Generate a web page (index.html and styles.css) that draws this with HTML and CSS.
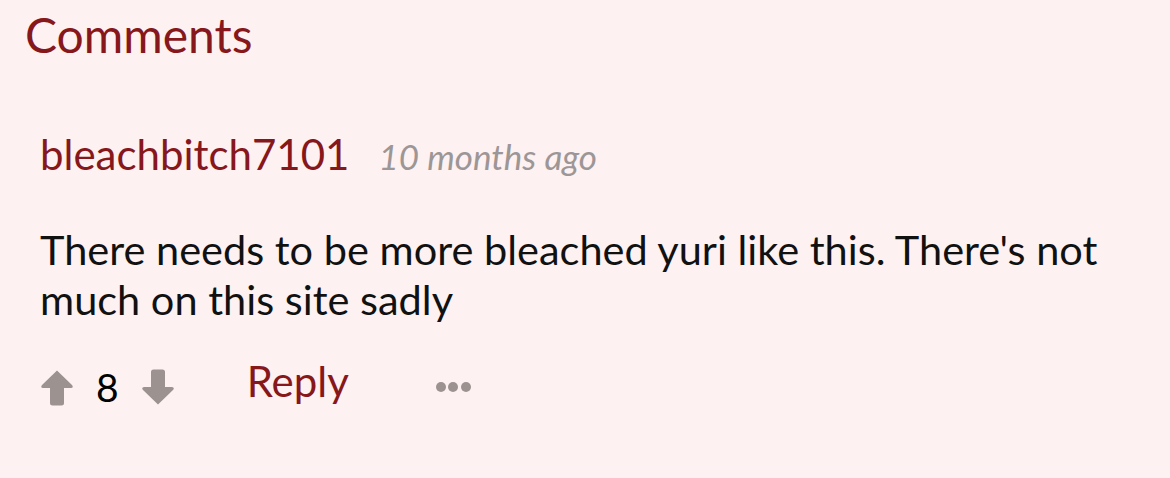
FILE: index.html
```html
<!DOCTYPE html>
<html lang="en">
<head>
<meta charset="utf-8">
<link rel="stylesheet" href="styles.css">
</head>
<body>
<section class="comments">
  <h2 class="title">Comments</h2>
  <article class="comment">
    <header class="meta">
      <span class="author">bleachbitch7101</span>
      <span class="time">10 months ago</span>
    </header>
    <p class="text">There needs to be more bleached yuri like this. There's not much on this site sadly</p>
    <footer class="actions">
      <div class="votes">
        <svg class="arrow" viewBox="0 0 34 37" width="34" height="37"><path d="M17 1.5 L32 16 Q34 18.5 31 19 L24 19 L24 34 Q24 36.5 21.5 36.5 L12.5 36.5 Q10 36.5 10 34 L10 19 L3 19 Q0 18.5 2 16 Z" fill="#9c9391"/></svg>
        <span class="score">8</span>
        <svg class="arrow" viewBox="0 0 34 37" width="34" height="37"><path d="M17 35.5 L32 21 Q34 18.5 31 18 L24 18 L24 3 Q24 0.5 21.5 0.5 L12.5 0.5 Q10 0.5 10 3 L10 18 L3 18 Q0 18.5 2 21 Z" fill="#9c9391"/></svg>
      </div>
      <span class="reply">Reply</span>
      <span class="more"><i></i><i></i><i></i></span>
    </footer>
  </article>
</section>
</body>
</html>
```
FILE: styles.css
```css
html, body {
  margin: 0;
  padding: 0;
  background: #fdf1f2;
  font-family: Lato, "Noto Sans", sans-serif;
}
.comments {
  padding: 5px 0 0 25px;
}
.title {
  margin: 0;
  font-weight: 400;
  font-size: 48px;
  line-height: 60px;
  color: #86171b;
}
.comment {
  padding: 64px 0 0 15px;
}
.meta {
  display: flex;
  align-items: baseline;
  gap: 29px;
}
.author {
  font-size: 42px;
  line-height: 50px;
  color: #86171b;
}
.time {
  font-size: 35px;
  line-height: 50px;
  font-style: italic;
  color: #9c9696;
}
.text {
  margin: 43px 0 0 0;
  font-size: 41.5px;
  line-height: 50px;
  color: #111;
  max-width: 1090px;
}
.actions {
  display: flex;
  align-items: center;
  height: 40px;
  margin-top: 43px;
}
.votes {
  display: flex;
  align-items: center;
  gap: 22px;
}
.score {
  font-size: 39px;
  color: #000;
  line-height: 40px;
}
.reply {
  margin-left: 72px;
  padding-bottom: 13px;
  font-size: 42px;
  line-height: 40px;
  color: #86171b;
}
.more {
  margin-left: 87px;
  display: flex;
  gap: 2.5px;
}
.more i {
  display: block;
  width: 10px;
  height: 10px;
  border-radius: 50%;
  background: #9c9391;
}
```
